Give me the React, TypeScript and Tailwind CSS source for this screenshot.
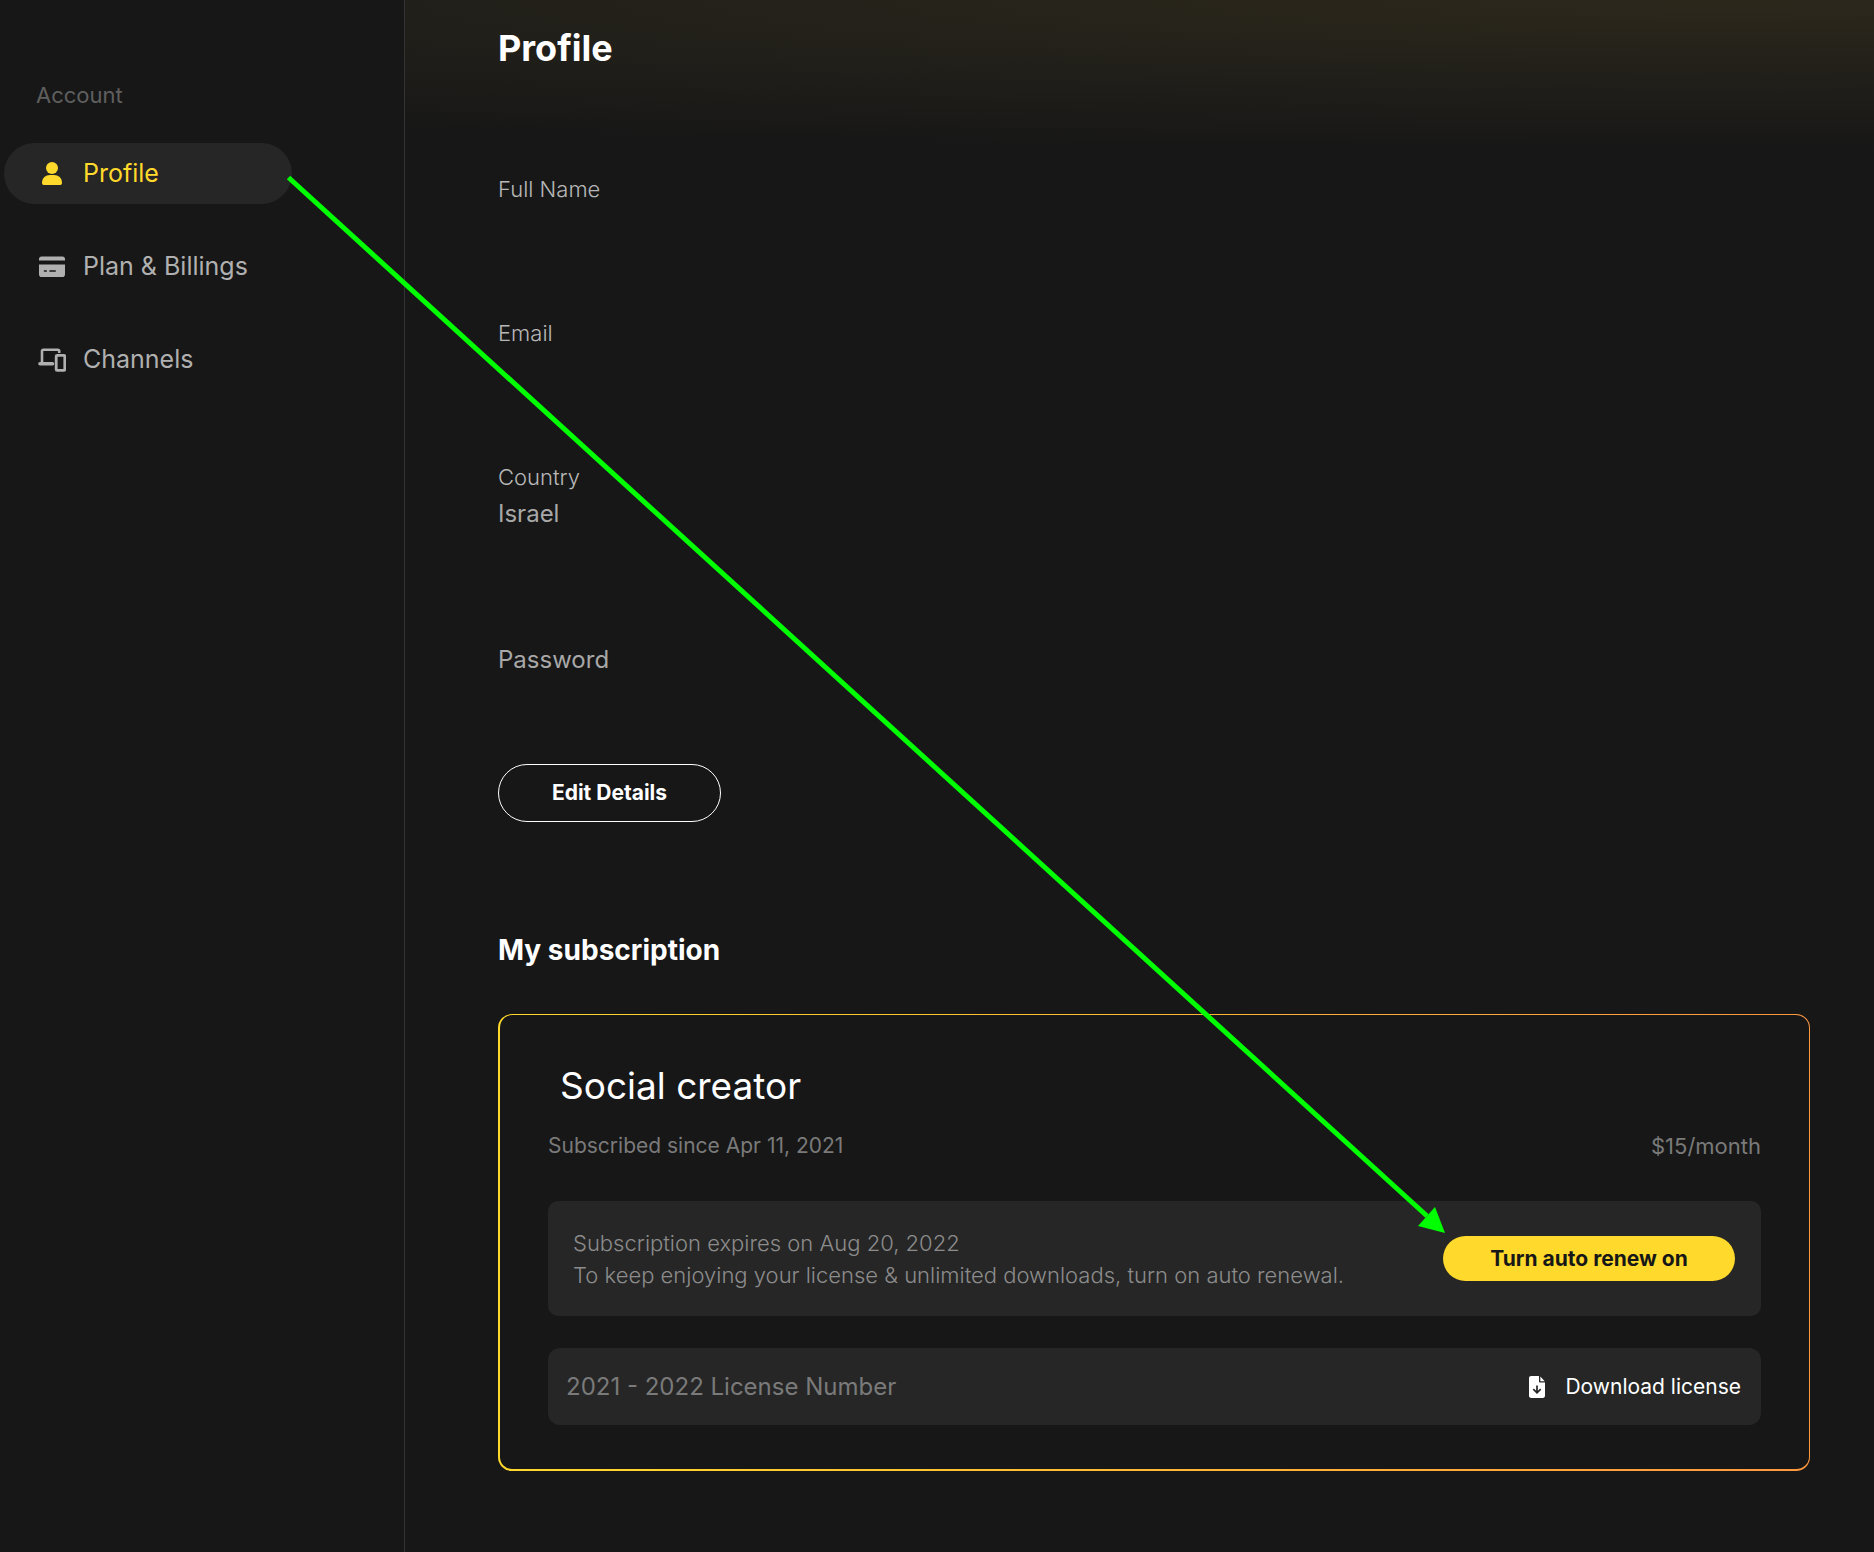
import React from "react";

function PersonIcon() {
  return (
    <svg viewBox="0 0 28 28" className="size-7 shrink-0" fill="currentColor" aria-hidden="true">
      <circle cx="14" cy="8" r="6" />
      <path d="M4 23c0-5 3.600-7.900 8-7.900h4c4.400 0 8 2.900 8 7.900 0 1.100-.6 1.900-1.600 1.900H5.600C4.600 24.900 4 24.100 4 23z" />
    </svg>
  );
}

function CardIcon() {
  return (
    <svg viewBox="0 0 28 28" className="size-7 shrink-0" fill="currentColor" aria-hidden="true">
      <path d="M1 7.500V6C1 4.600 2 3.500 3.500 3.500h21C26 3.500 27 4.600 27 6v1.500z" />
      <path
        fillRule="evenodd"
        d="M1 11.500h26v10c0 1.500-1 2.600-2.500 2.600h-21C2 24.100 1 23 1 21.500zM6.500 17.200a.8.8 0 0 0 0 1.600h1.700a.8.8 0 0 0 0-1.600zM12 17.200a.8.8 0 0 0 0 1.600h5.200a.8.8 0 0 0 0-1.600z"
      />
    </svg>
  );
}

function DevicesIcon() {
  return (
    <svg viewBox="0 0 28 28" className="size-7 shrink-0" fill="none" stroke="currentColor" aria-hidden="true">
      <path strokeWidth="2.600" d="M4 16.500V5.200C4 4.300 4.500 3.800 5.400 3.800h14.400c.9 0 1.400.5 1.400 1.400V7" />
      <path strokeWidth="3.600" strokeLinecap="round" d="M2 17.700h12.500" />
      <rect x="18.200" y="9.400" width="8.600" height="15" rx="1" strokeWidth="2.800" />
    </svg>
  );
}

function FileDownIcon() {
  return (
    <svg viewBox="0 0 16 22" className="h-[22px] w-4 shrink-0" aria-hidden="true">
      <path fill="#fff" d="M2.200 0H10v5.200C10 6 10.500 6.500 11.300 6.500H16v13.300c0 1.300-.9 2.200-2.200 2.200H2.200C.9 22 0 21.100 0 19.800V2.200C0 .9.900 0 2.200 0z" />
      <path fill="#fff" d="M11.300.6 15.700 5.200h-4.400z" />
      <path fill="none" stroke="#262626" strokeWidth="1.700" d="M8 9.500v7M4.300 13.200 8 16.800l3.700-3.600" />
    </svg>
  );
}

const navItems = [
  { label: "Profile", icon: PersonIcon, active: true },
  { label: "Plan & Billings", icon: CardIcon, active: false },
  { label: "Channels", icon: DevicesIcon, active: false },
];

function Sidebar() {
  return (
    <aside className="w-[405px] shrink-0 border-r border-[#333] px-1 pt-[79px]">
      <h2 className="pl-8 text-[22px] leading-8 text-[#5f5f5f]">Account</h2>
      <nav className="mt-8 flex flex-col gap-8" aria-label="Account">
        {navItems.map(({ label, icon: Icon, active }) => (
          <a
            key={label}
            href="#"
            aria-current={active ? "page" : undefined}
            className={
              active
                ? "flex h-[61px] w-72 items-center gap-[17px] rounded-full bg-[#262626] pl-[34px] text-[25px] text-[#ffd92b]"
                : "flex h-[61px] w-72 items-center gap-[17px] rounded-full pl-[34px] text-[25px] text-[#b0b0b0]"
            }
          >
            <Icon />
            {label}
          </a>
        ))}
      </nav>
    </aside>
  );
}

function Details() {
  return (
    <dl className="mt-[101px] text-[#a8a8a8]">
      <div className="min-h-36">
        <dt className="text-[22px] leading-8 font-light text-[#b8b8b8]">Full Name</dt>
      </div>
      <div className="min-h-36">
        <dt className="text-[22px] leading-8 font-light text-[#b8b8b8]">Email</dt>
      </div>
      <div className="min-h-[183px]">
        <dt className="text-[22px] leading-8 font-light text-[#b8b8b8]">Country</dt>
        <dd className="mt-[5px] text-2xl leading-8">Israel</dd>
      </div>
      <div className="min-h-[120px]">
        <dt className="text-2xl leading-8">Password</dt>
      </div>
    </dl>
  );
}

function Subscription() {
  return (
    <section className="mt-28">
      <h2 className="text-[28px] leading-8 font-bold">My subscription</h2>
      <div className="mt-12 rounded-[14px] border-t border-r border-b-2 border-l-2 border-transparent px-12 pt-[47px] pb-11 [background:linear-gradient(#171717,#171717)_padding-box,linear-gradient(90deg,#ffd92b,#ff983f)_border-box]">
        <h3 className="pl-3 text-[37px] leading-12">Social creator</h3>
        <div className="mt-5 flex justify-between text-[22px] leading-8 text-[#7a7a7a]">
          <p className="text-[21px]">Subscribed since Apr 11, 2021</p>
          <p>$15/month</p>
        </div>
        <div className="mt-[39px] flex min-h-[115px] items-center justify-between rounded-[10px] bg-[#262626] pr-[26px] pl-[25px]">
          <p className="text-[22px] leading-8 font-light text-[#8c8c8c]">
            Subscription expires on Aug 20, 2022
            <br />
            To keep enjoying your license &amp; unlimited downloads, turn on auto renewal.
          </p>
          <button type="button" className="h-[45px] w-[292px] shrink-0 rounded-full bg-[#ffd92b] text-[21px] font-bold text-[#171717]">
            Turn auto renew on
          </button>
        </div>
        <div className="mt-8 flex min-h-[77px] items-center justify-between rounded-xl bg-[#262626] pr-5 pl-[18px]">
          <p className="text-2xl text-[#7a7a7a]">2021 - 2022 License Number</p>
          <a href="#" className="flex items-center gap-5 text-[21px]">
            <FileDownIcon />
            Download license
          </a>
        </div>
      </div>
    </section>
  );
}

function Arrow() {
  return (
    <svg
      viewBox="0 0 1162 1062"
      className="pointer-events-none absolute top-[174px] left-[286px] h-[1062px] w-[1162px]"
      aria-hidden="true"
    >
      <path d="M2.500 3.500 1141 1042" stroke="#00ff00" strokeWidth="5" />
      <path d="M1159 1059 1132 1052 1149 1033z" fill="#00ff00" />
    </svg>
  );
}

export default function App() {
  return (
    <div className="relative flex min-h-screen overflow-hidden bg-[#171717] font-['Inter','Liberation_Sans',sans-serif] text-white">
      <Sidebar />
      <main className="min-w-0 flex-1 bg-[radial-gradient(ellipse_2600px_150px_at_90%_0px,#2c281c,#171717)] pt-6 pr-16 pl-[93px]">
        <h1 className="text-4xl leading-12 font-bold">Profile</h1>
        <Details />
        <button type="button" className="h-[58px] w-[223px] rounded-full border border-white text-[21px] font-bold">
          Edit Details
        </button>
        <Subscription />
      </main>
      <Arrow />
    </div>
  );
}
